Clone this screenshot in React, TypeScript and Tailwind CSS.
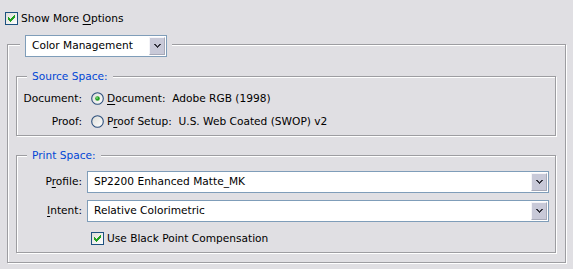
import React from "react";

const CHECK_COLS: [number, number][] = [
  [3, 5],
  [4, 6],
  [5, 7],
  [6, 6],
  [7, 5],
  [8, 4],
  [9, 3],
];

function CheckBox() {
  return (
    <svg width="13" height="13" viewBox="0 0 13 13" className="shrink-0" shapeRendering="crispEdges">
      <defs>
        <linearGradient id="cbg" x1="0" y1="0" x2="1" y2="1">
          <stop offset="0" stopColor="#dcdcd7" />
          <stop offset="1" stopColor="#ffffff" />
        </linearGradient>
      </defs>
      <rect x="0.5" y="0.5" width="12" height="12" fill="url(#cbg)" stroke="#1c5180" />
      {CHECK_COLS.map(([x, y]) => (
        <rect key={x} x={x} y={y} width="1" height="3" fill="#21a121" />
      ))}
    </svg>
  );
}

function Radio({ checked }: { checked?: boolean }) {
  return (
    <svg width="13" height="13" viewBox="0 0 13 13" className="shrink-0">
      <defs>
        <linearGradient id={checked ? "rg1" : "rg0"} x1="0" y1="0" x2="1" y2="1">
          <stop offset="0" stopColor="#dcdcd7" />
          <stop offset="1" stopColor="#ffffff" />
        </linearGradient>
      </defs>
      <circle cx="6.5" cy="6.5" r="5.8" fill={`url(#${checked ? "rg1" : "rg0"})`} stroke="#2c4f7c" strokeWidth="1.1" />
      {checked && <circle cx="6.5" cy="6.5" r="2.3" fill="#21a121" />}
      {checked && <circle cx="6" cy="6" r="0.9" fill="#7fd67f" />}
    </svg>
  );
}

function Arrow() {
  return (
    <svg width="7" height="4" viewBox="0 0 7 4" shapeRendering="crispEdges">
      <path
        d="M0 0h2v1H0zM5 0h2v1H5zM1 1h2v1H1zM4 1h2v1H4zM2 2h3v1H2zM3 3h1v1H3z"
        fill="#33333d"
      />
    </svg>
  );
}

function Select({ text, w }: { text: string; w: string }) {
  return (
    <div className={`flex h-[22px] ${w} items-stretch border border-[#7f9db9] bg-white`}>
      <div className="flex flex-1 items-center pl-[6px] whitespace-pre">{text}</div>
      <div className="my-px mr-px flex w-[16px] items-center justify-center border-t border-l border-t-[#f4f4f8] border-l-[#f4f4f8] border-r border-b border-r-[#a7a9b8] border-b-[#a7a9b8] bg-[#c8c9d8]">
        <Arrow />
      </div>
    </div>
  );
}

function Legend({ children }: { children: React.ReactNode }) {
  return (
    <div className="-mt-[7px] ml-[10px] h-[13px] w-fit bg-[#e0dfe3] px-[5px] leading-[13px] text-[#0046d5]">
      {children}
    </div>
  );
}

const groupBox =
  "w-full border border-[#9d9da1] shadow-[inset_1px_1px_0_#ffffff,1px_1px_0_#ffffff]";

export default function App() {
  return (
    <div
      className="flex h-[269px] w-[573px] flex-col bg-[#e0dfe3] text-[10.6px] text-black"
      style={{ fontFamily: '"DejaVu Sans", Tahoma, sans-serif' }}
    >
      <div className="ml-[5px] mt-[12px] flex h-[13px] items-center">
        <CheckBox />
        <span className="ml-[3px]">
          Show More <span className="underline underline-offset-[2px]">O</span>ptions
        </span>
      </div>

      <div
        className={`ml-[7px] mt-[19px] h-[219px] w-[559px] border border-[#9d9da1] pl-[8px] pr-[9px] shadow-[inset_1px_1px_0_#ffffff,1px_1px_0_#ffffff]`}
      >
        <div className="-mt-[10px] ml-[4px] w-fit bg-[#e0dfe3] px-[5px]">
          <Select text="Color Management" w="w-[142px]" />
        </div>

        <div className={`${groupBox} mt-[19px] h-[60px]`}>
          <Legend>Source Space:</Legend>
          <div className="mt-[9px] flex h-[13px] items-center">
            <div className="w-[65px] text-right">Document:</div>
            <div className="ml-[9px]">
              <Radio checked />
            </div>
            <span className="ml-[3px] whitespace-pre">
              <span className="underline underline-offset-[2px]">D</span>ocument:  Adobe RGB (1998)
            </span>
          </div>
          <div className="mt-[10px] flex h-[13px] items-center">
            <div className="w-[65px] text-right">Proof:</div>
            <div className="ml-[9px]">
              <Radio />
            </div>
            <span className="ml-[3px] whitespace-pre">
              P<span className="underline underline-offset-[2px]">r</span>oof Setup:  U.S. Web Coated (SWOP) v2
            </span>
          </div>
        </div>

        <div className={`${groupBox} mt-[19px] h-[98px]`}>
          <Legend>Print Space:</Legend>
          <div className="mt-[9px] flex items-center">
            <div className="w-[65px] text-right">
              P<span className="underline underline-offset-[2px]">r</span>ofile:
            </div>
            <div className="ml-[5px]">
              <Select text="SP2200 Enhanced Matte_MK" w="w-[462px]" />
            </div>
          </div>
          <div className="mt-[7px] flex items-center">
            <div className="w-[65px] text-right">
              <span className="underline underline-offset-[2px]">I</span>ntent:
            </div>
            <div className="ml-[5px]">
              <Select text="Relative Colorimetric" w="w-[462px]" />
            </div>
          </div>
          <div className="ml-[74px] mt-[10px] flex h-[13px] items-center">
            <CheckBox />
            <span className="ml-[3px]">Use Black Point Compensation</span>
          </div>
        </div>
      </div>
    </div>
  );
}
